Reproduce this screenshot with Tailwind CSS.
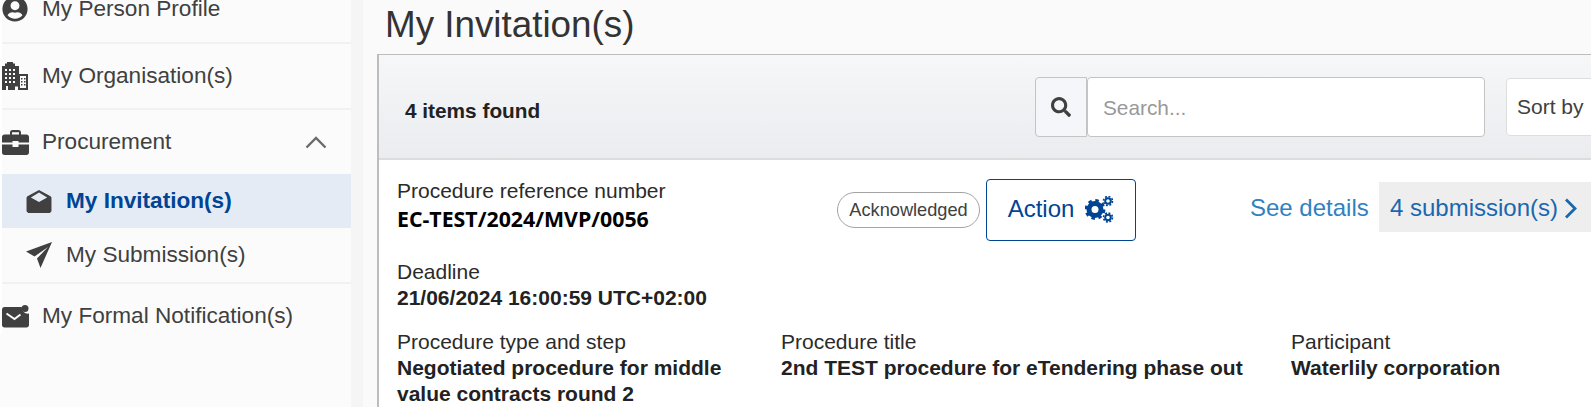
<!DOCTYPE html>
<html lang="en">
<head>
    <meta charset="UTF-8" />
    <title>My Invitation(s)</title>
    <script src="https://cdn.jsdelivr.net/npm/@tailwindcss/browser@4"></script>
</head>
<body class="h-[407px] w-[1591px] overflow-hidden bg-[#fbfbfb] flex font-['Liberation_Sans',Arial,sans-serif] text-[#404040]">
    <div class="w-[2px] h-[334px] shrink-0 bg-white"></div>
    <!-- Sidebar -->
    <aside class="w-[349px] h-full shrink-0 bg-[#fbfbfb] flex flex-col text-[22.600px] leading-6">
        <a class="h-[44px] shrink-0 flex items-end pb-[21px] gap-[14px] border-b-2 border-[#f1f1f1]">
            <svg class="w-[26px] h-[26px] -mb-[1px]" viewBox="0 0 496 512" fill="#404040"><path d="M248 8C111 8 0 119 0 256s111 248 248 248 248-111 248-248S385 8 248 8zm0 96c48.6 0 88 39.4 88 88s-39.4 88-88 88-88-39.4-88-88 39.4-88 88-88zm0 344c-58.7 0-111.3-26.6-146.5-68.2 18.8-35.4 55.6-59.8 98.5-59.8 2.4 0 4.8.4 7.1 1.1 13 4.2 26.6 6.9 40.9 6.9 14.3 0 28-2.7 40.9-6.9 2.3-.7 4.7-1.1 7.1-1.1 42.9 0 79.7 24.4 98.5 59.8C359.3 421.4 306.7 448 248 448z"/></svg>
            <span>My Person Profile</span>
        </a>
        <a class="h-[66px] shrink-0 flex items-center gap-[14px] border-b-2 border-[#f1f1f1]">
            <svg class="w-[26px] h-[28px]" viewBox="0 0 26 28" fill="#404040">
                <path d="M0 28V4h3V1.500h2V0h6v1.500h2V4h4v8h9v16h-10v-3.500h-3V28H6v-4H4v4z"/>
                <path fill="#fbfbfb" d="M3 7h2v2H3zm4 0h2v2H7zm4 0h2v2h-2zM3 11h2v2H3zm4 0h2v2H7zm4 0h2v2h-2zM3 15h2v2H3zm4 0h2v2H7zm4 0h2v2h-2zM3 19h2v2H3zm4 0h2v2H7zm4 0h2v2h-2zM18 14h6v12h-6z"/>
                <path d="M19 16h1.500v1.500H19zm3 0h1.500v1.500H22zm-3 3h1.500v1.500H19zm3 0h1.500v1.500H22zm-3 3h1.500v1.500H19zm3 0h1.500v1.500H22z"/>
            </svg>
            <span>My Organisation(s)</span>
        </a>
        <a class="h-[64px] shrink-0 flex items-center gap-[13px]">
            <svg class="w-[27px] h-[25px]" viewBox="0 0 27 25" fill="#404040">
                <path d="M8 5V2.500C8 1.200 9 0 10.500 0h6C18 0 19 1.200 19 2.500V5h-2V2.200h-7V5z"/>
                <path d="M2.500 4.500h22c1.400 0 2.500 1.100 2.500 2.500v5.500H16.500V11h-6v1.500H0V7c0-1.400 1.100-2.500 2.500-2.500zM0 14.500h10.500V17h6v-2.500H27v8c0 1.400-1.100 2.500-2.500 2.500h-22C1.100 25 0 23.900 0 22.500z"/>
            </svg>
            <span class="flex-1">Procurement</span>
            <svg class="w-[22px] h-[14px] mr-[24px]" viewBox="0 0 22 14" fill="none" stroke="#6b6b6b" stroke-width="2.400"><path d="M1.500 12.500 11 3l9.500 9.500"/></svg>
        </a>
        <a class="h-[54px] shrink-0 flex items-center gap-[14px] pl-[24px] bg-[#e4ebf5] text-[#004494] font-bold">
            <svg class="w-[26px] h-[23px]" viewBox="0 0 26 24" fill="#404040">
                <path d="M13 0 25 6.500c.7.400 1 1 1 1.800V21c0 1.700-1.300 3-3 3H3c-1.700 0-3-1.300-3-3V8.300c0-.8.300-1.400 1-1.800z"/>
                <path fill="#e4ebf5" d="M13 2.500 4.500 7.800 13 12.500l8.500-4.700z"/>
            </svg>
            <span>My Invitation(s)</span>
        </a>
        <a class="h-[54px] shrink-0 flex items-center gap-[14px] pl-[24px]">
            <svg class="w-[26px] h-[26px]" viewBox="0 0 26 26" fill="#404040"><path d="M26 0 0 9.500 8.500 14.500 22 5 11 16.500 14.500 26z"/></svg>
            <span>My Submission(s)</span>
        </a>
        <a class="h-[66px] shrink-0 flex items-center gap-[13px] border-t-2 border-[#f1f1f1]">
            <svg class="w-[27px] h-[23px]" viewBox="0 0 27 23" fill="#404040">
                <path d="M2.500 2h17.300a6 6 0 0 0 7.200 6.500V20c0 1.400-1.100 2.500-2.500 2.500h-22C1.100 22.500 0 21.400 0 20V4.500C0 3.100 1.100 2 2.500 2z"/>
                <circle cx="23" cy="3.500" r="3.500"/>
                <path d="M4.500 8.500 12.500 14l6-4.500" fill="none" stroke="#fbfbfb" stroke-width="2"/>
            </svg>
            <span>My Formal Notification(s)</span>
        </a>
    </aside>
    <div class="w-[12px] h-full shrink-0 bg-[#f5f5f5]"></div>

    <!-- Main content -->
    <main class="flex-1 min-w-0 h-full bg-[#fafafa] pl-[14px] overflow-hidden">
        <h1 class="h-[54px] pl-[8px] text-[36.800px] leading-[50px] text-[#333]">My Invitation(s)</h1>
        <section class="h-[400px] bg-white border-t border-l-2 border-[#bdbdbd]">
            <header class="h-[105px] flex items-center pl-[26px] border-b-2 border-[#dcdcdc] bg-linear-to-b from-[#f6f7f9] to-[#ebecef]">
                <span class="w-[630px] shrink-0 mt-[8px] text-[20.800px] font-bold text-[#222]">4 items found</span>
                <button class="w-[52px] h-[60px] shrink-0 flex items-center justify-center bg-[#f5f6f9] border border-[#c4c4c4] rounded-l-[4px]">
                    <svg class="w-[20px] h-[20px]" viewBox="0 0 512 512" fill="#404040"><path d="M505 442.700 405.300 343c-4.500-4.500-10.600-7-17-7H372c27.600-35.300 44-79.700 44-128C416 93.100 322.900 0 208 0S0 93.100 0 208s93.100 208 208 208c48.300 0 92.700-16.400 128-44v16.300c0 6.400 2.500 12.500 7 17l99.700 99.700c9.400 9.400 24.600 9.400 33.900 0l28.300-28.300c9.400-9.400 9.400-24.600.1-34zM208 336c-70.700 0-128-57.200-128-128 0-70.700 57.200-128 128-128 70.700 0 128 57.200 128 128 0 70.700-57.200 128-128 128z"/></svg>
                </button>
                <div class="w-[398px] h-[60px] shrink-0 flex items-center pl-[15px] pt-[2px] bg-white border border-[#c4c4c4] rounded-[4px] text-[20.800px] text-[#999]">Search...</div>
                <div class="ml-[21px] w-[150px] h-[58px] shrink-0 flex items-center pl-[10px] bg-white border border-[#dedede] rounded-[4px] text-[21px] text-[#404040]">Sort by</div>
            </header>
            <div class="pl-[18px] text-[21px] leading-[26px] text-[#2b2b2b]">
                <div class="h-[92px] flex">
                    <div class="w-[440px] shrink-0 pt-[17px]">
                        <p class="leading-[28px]">Procedure reference number</p>
                        <p class="font-['Open_Sans',sans-serif] font-bold text-[21.300px] leading-[28px] text-black whitespace-nowrap">EC-TEST/2024/MVP/0056</p>
                    </div>
                    <div class="pt-[19px] flex items-start shrink-0">
                        <span class="mt-[13px] h-[36px] w-[143px] flex items-center justify-center border border-[#a3a3a3] rounded-full text-[18.200px] text-[#404040]">Acknowledged</span>
                        <button class="ml-[6px] w-[150px] h-[62px] flex items-center justify-center gap-[11px] pb-[2px] border border-[#004494] rounded-[4px] text-[24px] text-[#004494]">
                            Action
                            <svg class="w-[29px] h-[27px]" viewBox="0 0 29 27" fill="none" stroke="#004494">
                                <circle cx="10" cy="13.500" r="6" stroke-width="5"/>
                                <circle cx="10" cy="13.500" r="9" stroke-width="2.800" stroke-dasharray="3.500 3.570"/>
                                <circle cx="23" cy="5" r="2.800" stroke-width="2"/>
                                <circle cx="23" cy="5" r="4.500" stroke-width="1.600" stroke-dasharray="1.900 1.630"/>
                                <circle cx="23" cy="21.500" r="2.800" stroke-width="2"/>
                                <circle cx="23" cy="21.500" r="4.500" stroke-width="1.600" stroke-dasharray="1.900 1.630"/>
                            </svg>
                        </button>
                    </div>
                    <div class="ml-[114px] pt-[22px] flex items-start shrink-0">
                        <a class="h-[50px] w-[129px] pt-[2px] flex items-center text-[24px] text-[#2f82c0]">See details</a>
                        <a class="w-[212px] h-[50px] pt-[2px] shrink-0 flex items-center gap-[6px] pl-[11px] bg-[#eeeeef] text-[24px] text-[#1a67ae]">
                            4 submission(s)
                            <svg class="w-[13px] h-[21px]" viewBox="0 0 13 21" fill="none" stroke="#1a67ae" stroke-width="2.800"><path d="M2 1.500 11 10.500 2 19.500"/></svg>
                        </a>
                    </div>
                </div>
                <div class="h-[70px] pt-[7px]">
                    <p>Deadline</p>
                    <p class="font-bold text-[#222]">21/06/2024 16:00:59 UTC+02:00</p>
                </div>
                <div class="flex pt-[7px]">
                    <div class="w-[384px] shrink-0">
                        <p>Procedure type and step</p>
                        <p class="w-[340px] font-bold text-[#222]">Negotiated procedure for middle value contracts round 2</p>
                    </div>
                    <div class="w-[510px] shrink-0">
                        <p>Procedure title</p>
                        <p class="font-bold text-[#222]">2nd TEST procedure for eTendering phase out</p>
                    </div>
                    <div>
                        <p>Participant</p>
                        <p class="font-bold text-[#222]">Waterlily corporation</p>
                    </div>
                </div>
            </div>
        </section>
    </main>
</body>
</html>
